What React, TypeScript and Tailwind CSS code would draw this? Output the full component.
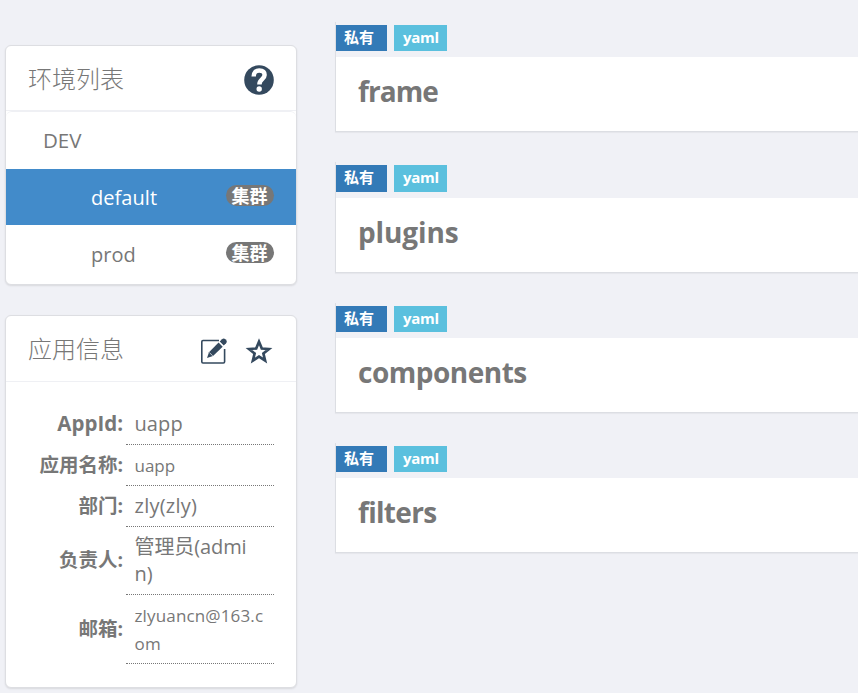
import React from 'react';

type Item = { name: string; gap: string; tagHeight: string; titleClass: string };

const items: Item[] = [
  { name: 'frame', gap: 'mt-[22px]', tagHeight: 'h-[26px]', titleClass: 'tracking-[-0.9px] -mt-1.5' },
  { name: 'plugins', gap: 'mt-[30px]', tagHeight: 'h-[27px]', titleClass: 'tracking-[-0.1px] -mt-1.5' },
  { name: 'components', gap: 'mt-[30px]', tagHeight: 'h-[26px]', titleClass: 'tracking-[-0.5px] -mt-1.5' },
  { name: 'filters', gap: 'mt-[30px]', tagHeight: 'h-[26px]', titleClass: 'tracking-[-0.7px] -mt-1.5' },
];

function HelpIcon() {
  return (
    <svg width="30" height="30" viewBox="0 0 30 30">
      <circle cx="15" cy="15" r="14.8" fill="#34495e" />
      <path d="M9.700 11.400C9.700 7.400 11.800 5.500 15.200 5.500c3.500 0 5.400 1.800 5.400 4.500 0 4.200-5.200 4.200-5.200 9.400" fill="none" stroke="#fff" strokeWidth="4.500" />
      <circle cx="15.200" cy="24" r="2.700" fill="#fff" />
    </svg>
  );
}

function EditIcon() {
  return (
    <svg width="28" height="28" viewBox="0 0 28 28" fill="#34495e">
      <path d="M19 3.500H3Q1.800 3.500 1.800 4.700V24.800Q1.800 26 3 26H23.400Q24.600 26 24.600 24.800V12" fill="none" stroke="#34495e" strokeWidth="1.600" />
      <path d="M7 21 9 15.300 18.600 5.600 22.700 9.700 13 19Z" />
      <path d="M19.700 4.600 22 2.300Q23.600.8 25.400 2.200 27.800 4.200 26.100 6.200L23.700 8.600Z" />
      <path d="M9.400 15.600 12.800 18.900M19 4.800 23.500 9.200" stroke="#fff" strokeWidth="0.700" />
    </svg>
  );
}

function StarIcon() {
  return (
    <svg width="28" height="28" viewBox="0 0 28 28">
      <path d="M14 4.800 16.800 11.500 23.900 12 18.400 16.500 20.100 23.500 14 19.700 7.900 23.500 9.600 16.500 4.100 12 11.200 11.500Z" fill="none" stroke="#34495e" strokeWidth="2.700" />
    </svg>
  );
}

function ClusterBadge() {
  return (
    <span className="flex h-[21px] w-12 items-center justify-center rounded-full bg-[#777] pr-px pt-px text-[18px] font-bold leading-none text-white">
      集群
    </span>
  );
}

function InfoRow({ label, height, labelClass = 'text-[19.5px]', children }: { label: string; height: string; labelClass?: string; children: React.ReactNode }) {
  return (
    <div className={`flex ${height}`}>
      <div className={`flex w-[120px] shrink-0 items-center justify-end pb-0.5 pr-[3px] font-bold ${labelClass}`}>{label}</div>
      <div className="flex w-[148px] items-center border-b border-dotted border-[#777] pl-[8.500px]">{children}</div>
    </div>
  );
}

export default function App() {
  return (
    <div className="flex h-[693px] w-[858px] overflow-hidden bg-[#f0f1f6] font-['Open_Sans','Noto_Sans_CJK_SC',sans-serif] text-[#777]">
      <aside className="ml-[5px] w-[292px] shrink-0 pt-[45px]">
        <section className="h-[240px] overflow-hidden rounded-md border border-[#dddee2] bg-white shadow-[0_1px_2px_rgba(0,0,0,0.1)]">
          <header className="flex h-[65px] items-center justify-between border-b border-[#eff0f4] pl-[22px] pr-[22px]">
            <h2 className="pt-px text-2xl font-light">环境列表</h2>
            <div className="mt-[3px]"><HelpIcon /></div>
          </header>
          <div className="flex h-[58px] items-center rounded-t-md border-t border-[#eff0f4] pl-[37px] text-[20.500px]">DEV</div>
          <div className="flex h-[56px] items-center justify-between bg-[#428bca] pl-[85px] pr-[22px] text-[20px] text-white">
            <span className="pt-0.5 tracking-[0.05px]">default</span>
            <span className="-mt-1"><ClusterBadge /></span>
          </div>
          <div className="flex h-[58px] items-center justify-between pl-[85px] pr-[22px] text-[20px]">
            <span className="pt-0.5">prod</span>
            <span className="-mt-1"><ClusterBadge /></span>
          </div>
        </section>

        <section className="mt-[30px] h-[373px] rounded-md border border-[#dddee2] bg-white shadow-[0_1px_2px_rgba(0,0,0,0.1)]">
          <header className="flex h-[66px] items-center border-b border-[#eff0f4] pl-[22px]">
            <h2 className="w-[172px] text-2xl font-light">应用信息</h2>
            <div className="mt-1 flex gap-[17px]"><EditIcon /><StarIcon /></div>
          </header>
          <div className="pt-[21px]">
            <InfoRow label="AppId:" height="h-[42px]" labelClass="text-[20.500px]"><span className="text-[20px] tracking-[0.1px]">uapp</span></InfoRow>
            <InfoRow label="应用名称:" height="h-[41px]"><span className="pt-px text-[17px]">uapp</span></InfoRow>
            <InfoRow label="部门:" height="h-[41px]"><span className="text-[20px] tracking-[0.25px]">zly(zly)</span></InfoRow>
            <InfoRow label="负责人:" height="h-[68px]"><span className="-mt-0.5 text-[20px] leading-[27px] tracking-[-0.1px]">管理员(admi<br />n)</span></InfoRow>
            <InfoRow label="邮箱:" height="h-[69px]"><span className="pt-0.5 text-[17px] leading-[28px] tracking-[0.15px]">zlyuancn@163.c<br />om</span></InfoRow>
          </div>
        </section>
      </aside>

      <main className="ml-[38px] flex-1">
        {items.map((item) => (
          <section key={item.name} className={`border-b border-l border-[#dcdee3] shadow-[0_1px_1px_rgba(0,0,0,0.04)] ${item.gap}`}>
            <div className="flex gap-[7px] pb-[6px] pt-[3px] text-[15px] font-bold leading-none text-white">
              <span className={`flex w-[51px] items-center bg-[#337ab7] pb-0.5 pl-2 ${item.tagHeight}`}>私有</span>
              <span className={`flex w-[53px] items-center bg-[#5bc0de] pb-0.5 pl-[9px] tracking-[-0.25px] ${item.tagHeight}`}>yaml</span>
            </div>
            <div className="flex h-[74px] items-center bg-white pl-[22px]">
              <h3 className={`text-[28px] font-bold ${item.titleClass}`}>{item.name}</h3>
            </div>
          </section>
        ))}
      </main>
    </div>
  );
}
